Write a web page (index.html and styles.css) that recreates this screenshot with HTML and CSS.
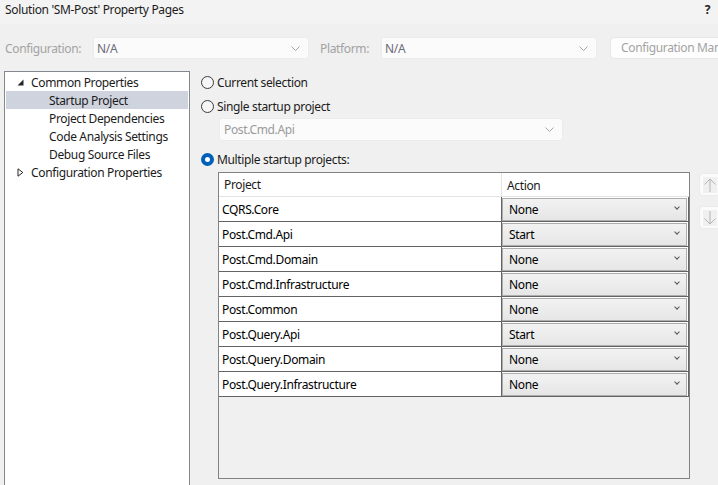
FILE: index.html
```html
<!DOCTYPE html>
<html>
<head>
<meta charset="utf-8">
<link rel="stylesheet" href="styles.css">
</head>
<body>
<div class="titlebar">
  <span class="title">Solution 'SM-Post' Property Pages</span>
  <span class="help">?</span>
</div>
<div class="toolbar">
  <span class="lbl lbl-config">Configuration:</span>
  <div class="combo"><span>N/A</span><svg class="chev" width="9" height="5" viewBox="0 0 9 5"><path d="M0.5 0.5 L4.5 4.5 L8.5 0.5" fill="none" stroke="#a8a8a8" stroke-width="1"/></svg></div>
  <span class="lbl lbl-plat">Platform:</span>
  <div class="combo"><span>N/A</span><svg class="chev" width="9" height="5" viewBox="0 0 9 5"><path d="M0.5 0.5 L4.5 4.5 L8.5 0.5" fill="none" stroke="#a8a8a8" stroke-width="1"/></svg></div>
  <div class="cfgbtn">Configuration Manager...</div>
</div>
<div class="main">
  <div class="tree">
    <div class="node"><svg class="tw" width="7" height="7" viewBox="0 0 7 7"><path d="M6.5 0.5 L6.5 6.5 L0.5 6.5 Z" fill="#262626"/></svg><span>Common Properties</span></div>
    <div class="node child selected"><span>Startup Project</span></div>
    <div class="node child"><span>Project Dependencies</span></div>
    <div class="node child"><span>Code Analysis Settings</span></div>
    <div class="node child"><span>Debug Source Files</span></div>
    <div class="node"><svg class="tw" width="7" height="9" viewBox="0 0 7 9"><path d="M1 0.8 L5.8 4.5 L1 8.2 Z" fill="none" stroke="#262626" stroke-width="1"/></svg><span>Configuration Properties</span></div>
  </div>
  <div class="content">
    <div class="radio-row r1"><span class="radio"></span><span>Current selection</span></div>
    <div class="radio-row r2"><span class="radio"></span><span>Single startup project</span></div>
    <div class="combo wide disabled"><span>Post.Cmd.Api</span><svg class="chev" width="9" height="5" viewBox="0 0 9 5"><path d="M0.5 0.5 L4.5 4.5 L8.5 0.5" fill="none" stroke="#a8a8a8" stroke-width="1"/></svg></div>
    <div class="radio-row r3"><span class="radio checked"></span><span>Multiple startup projects:</span></div>
    <div class="grid-area">
      <div class="grid">
        <div class="grow head">
          <div class="gc c1">Project</div>
          <div class="gc c2">Action</div>
        </div>
        <div class="grow"><div class="gc c1">CQRS.Core</div><div class="gc c2"><div class="acombo">None<span class="achev"></span></div></div></div>
        <div class="grow"><div class="gc c1">Post.Cmd.Api</div><div class="gc c2"><div class="acombo">Start<span class="achev"></span></div></div></div>
        <div class="grow"><div class="gc c1">Post.Cmd.Domain</div><div class="gc c2"><div class="acombo">None<span class="achev"></span></div></div></div>
        <div class="grow"><div class="gc c1">Post.Cmd.Infrastructure</div><div class="gc c2"><div class="acombo">None<span class="achev"></span></div></div></div>
        <div class="grow"><div class="gc c1">Post.Common</div><div class="gc c2"><div class="acombo">None<span class="achev"></span></div></div></div>
        <div class="grow"><div class="gc c1">Post.Query.Api</div><div class="gc c2"><div class="acombo">Start<span class="achev"></span></div></div></div>
        <div class="grow"><div class="gc c1">Post.Query.Domain</div><div class="gc c2"><div class="acombo">None<span class="achev"></span></div></div></div>
        <div class="grow"><div class="gc c1">Post.Query.Infrastructure</div><div class="gc c2"><div class="acombo">None<span class="achev"></span></div></div></div>
      </div>
      <div class="movers">
        <div class="mover"><svg width="14" height="16" viewBox="0 0 14 16"><rect width="14" height="16" fill="#f0f0f0"/><path d="M7 2 L7 15 M1.5 7.5 L7 2 L12.5 7.5" fill="none" stroke="#b4b4b4" stroke-width="1"/></svg></div>
        <div class="mover"><svg width="14" height="16" viewBox="0 0 14 16"><rect width="14" height="16" fill="#f0f0f0"/><path d="M7 1 L7 14 M1.5 8.5 L7 14 L12.5 8.5" fill="none" stroke="#b4b4b4" stroke-width="1"/></svg></div>
      </div>
    </div>
  </div>
</div>
</body>
</html>
```
FILE: styles.css
```css
* { box-sizing: border-box; }
html, body { margin: 0; padding: 0; }
body {
  width: 718px;
  height: 485px;
  overflow: hidden;
  background: #f0f0f0;
  font-family: "Noto Sans", "Open Sans", sans-serif;
  font-size: 12px;
  letter-spacing: -0.35px;
  color: #1b1b1b;
}
.titlebar {
  height: 24px;
  background: #f3f3f3;
  display: flex;
  justify-content: space-between;
  align-items: flex-start;
  padding: 1px 8px 0 5px;
  line-height: 18px;
}
.help { font-weight: bold; color: #222; }
.toolbar {
  height: 47px;
  display: flex;
  align-items: center;
  padding-left: 5px;
  padding-top: 1px;
  white-space: nowrap;
}
.toolbar > * { flex: none; }
.lbl { color: #a3a3a3; }
.lbl-config { width: 88px; }
.lbl-plat { width: 61px; margin-left: 11px; }
.combo {
  width: 216px;
  height: 22px;
  background: #fbfbfb;
  border: 1px solid #ececec;
  border-radius: 3px;
  display: flex;
  align-items: center;
  justify-content: space-between;
  padding: 0 8px 0 3px;
  color: #6b6b78;
  flex: none;
}
.chev { display: block; }
.cfgbtn {
  margin-left: 13px;
  width: 120px;
  height: 22px;
  background: #fdfdfd;
  border: 1px solid #e6e6e6;
  border-radius: 4px;
  color: #a3a3a3;
  padding-left: 10px;
  line-height: 20px;
  overflow: hidden;
}
.main { display: flex; }
.tree {
  margin-left: 4px;
  width: 186px;
  height: 420px;
  background: #fff;
  border: 1px solid #828790;
  padding: 1px;
  flex: none;
}
.node {
  height: 18px;
  display: flex;
  align-items: center;
  padding-left: 11px;
  white-space: nowrap;
}
.node svg.tw { width: 7px; margin-right: 7px; flex: none; display: block; }
.node.child { padding-left: 43px; }
.node.selected { background: #cfd3de; }
.content {
  flex: 1;
  padding-left: 11px;
}
.radio-row {
  display: flex;
  align-items: center;
  height: 18px;
  white-space: nowrap;
}
.r1 { margin-top: 2px; }
.r2 { margin-top: 6px; }
.r3 { margin-top: 9px; }
.radio {
  width: 13px;
  height: 13px;
  border-radius: 50%;
  border: 1px solid #3b3b3b;
  background: #f6f6f6;
  margin-right: 3px;
  flex: none;
}
.radio.checked {
  background: #fff;
  border: 4px solid #005fb8;
}
.combo.wide.disabled {
  margin-left: 18px;
  margin-top: 3px;
  width: 344px;
  height: 23px;
  color: #9a9a9a;
  padding-left: 4px;
}
.grid-area {
  display: flex;
  margin-top: 4px;
  margin-left: 17px;
}
.grid {
  width: 472px;
  height: 307px;
  border: 1px solid #828282;
  background: #f0f0f0;
  flex: none;
}
.grow {
  display: flex;
  height: 25px;
  border-bottom: 1px solid #646464;
  background: #fff;
}
.grow.head {
  height: 24px;
  border-bottom: 1px solid #e3e3e3;
}
.gc {
  display: flex;
  align-items: center;
  white-space: nowrap;
  color: #000;
}
.c1 {
  width: 283px;
  padding-left: 3px;
  border-right: 1px solid #646464;
}
.c2 {
  flex: 1;
  padding: 1px 1px 0 0;
  border-right: 1px solid #646464;
}
.head .c1 { border-right: 1px solid #e3e3e3; padding-left: 5px; color: #1b1b1b; }
.head .c2 { padding-left: 5px; border-right: none; color: #1b1b1b; }
.acombo {
  width: 100%;
  height: 23px;
  border: 1px solid #adadad;
  background: linear-gradient(#f2f2f2, #e6e6e6);
  display: flex;
  align-items: center;
  justify-content: space-between;
  padding: 0 7px 0 6px;
  margin-top: -1px;
}
.achev {
  width: 4px;
  height: 4px;
  border-right: 1px solid #555;
  border-bottom: 1px solid #555;
  transform: rotate(45deg);
  margin-top: -5px;
}
.movers {
  display: flex;
  flex-direction: column;
  gap: 10px;
  margin-left: 9px;
  margin-top: 1px;
}
.mover {
  width: 24px;
  height: 23px;
  background: #fbfbfb;
  border: 1px solid #ebebeb;
  border-radius: 4px;
  display: flex;
  align-items: center;
  padding-left: 3px;
  flex: none;
}
.mover svg { display: block; }
```
